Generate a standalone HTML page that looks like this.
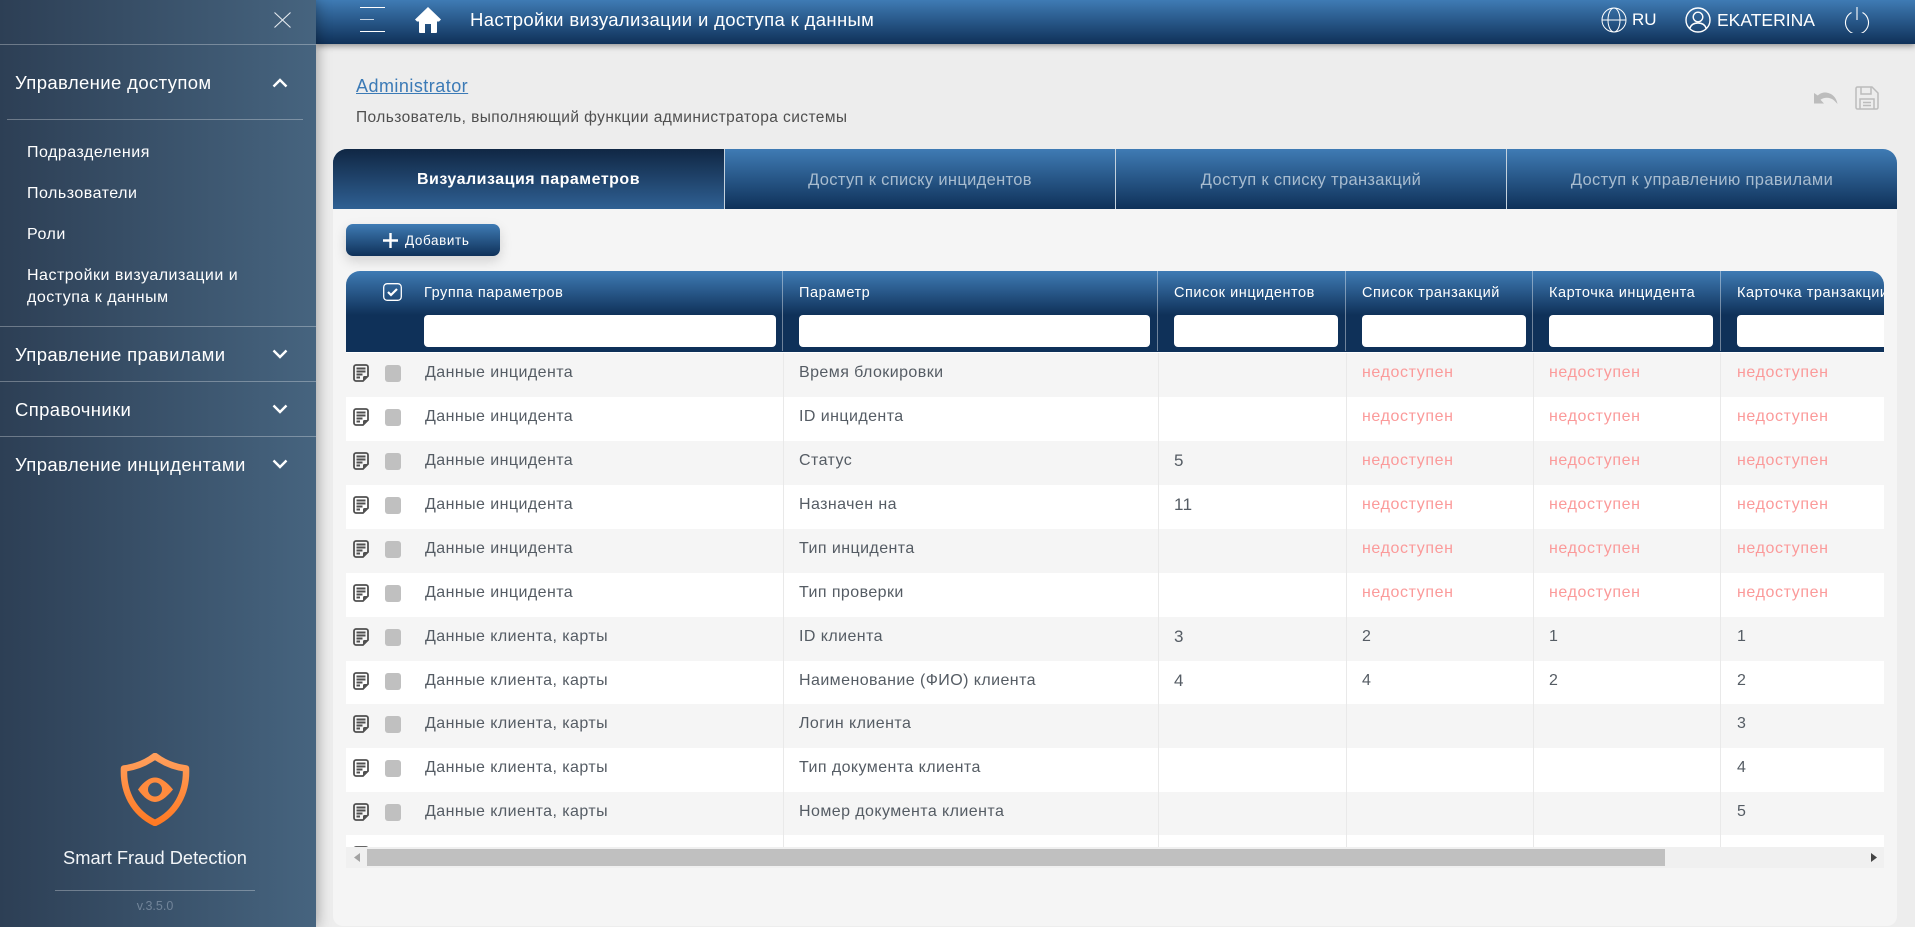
<!DOCTYPE html>
<html lang="ru"><head><meta charset="utf-8"><title>Настройки визуализации и доступа к данным</title>
<style>
*{box-sizing:border-box}
html,body{margin:0;padding:0;width:1915px;height:927px;overflow:hidden;background:#ededed;font-family:"Liberation Sans",sans-serif}
.a{position:absolute;white-space:nowrap}
.g{background:linear-gradient(180deg,#3f7bb4 0%,#0f3159 100%)}
#side{position:absolute;left:0;top:0;width:316px;height:927px;background:linear-gradient(90deg,#2d3f55 0%,#46647f 100%);box-shadow:0 0 14px rgba(0,0,0,.4);z-index:5;color:#fff}
#side .l{position:absolute;height:1px;background:rgba(255,255,255,.3)}
.m{position:absolute;left:15px;font-size:18.5px;line-height:22px;white-space:nowrap;letter-spacing:.38px}
.s{position:absolute;left:27px;font-size:16px;line-height:20px;white-space:nowrap;letter-spacing:.5px}
#top{position:absolute;left:316px;top:0;width:1599px;height:44px;z-index:4;box-shadow:0 2px 6px rgba(0,0,0,.4);color:#fff}
#card{position:absolute;left:333px;top:149px;width:1564px;height:777px;background:#f5f5f5;border-radius:14px 14px 10px 10px;overflow:hidden}
.tab{position:absolute;top:0;height:60px;line-height:63px;text-align:center;color:#a8bccf;font-size:16.5px;border-left:1px solid #c4d2de;letter-spacing:.33px}
#tbl{position:absolute;left:346px;top:271px;width:1538px;height:576px;overflow:hidden;border-radius:14px 14px 0 0;background:#fff}
#hd{position:absolute;left:0;top:0;width:1538px;height:81px;background:linear-gradient(180deg,#3f7bb4 0,#0f3159 44px,#0f3159 100%);color:#fff;font-size:14.5px}
#hd span{position:absolute;top:13px;line-height:18px;white-space:nowrap;letter-spacing:.55px}
#hd u{position:absolute;top:44px;height:32px;background:#fff;border-radius:4px;display:block}
#hd em{position:absolute;top:0;width:1px;height:80px;background:rgba(255,255,255,.4)}
.r{position:absolute;left:0;width:1538px;height:44px;background:#fff;color:#555c64;font-size:16px;line-height:44px}
.r.o{background:#f5f5f5}
.r span{position:absolute;top:-2px;white-space:nowrap;letter-spacing:.43px}
.r svg{position:absolute;left:7px;top:11px}
.r i{position:absolute;left:39px;top:12px;width:16px;height:17px;background:#c0c0c0;border-radius:3px}
.c1{left:79px}.c2{left:453px}.c3{left:828px;font-size:17px}.c4{left:1016px}.c5{left:1203px}.c6{left:1391px}
.r span.n{color:#fb9a9a;letter-spacing:.6px}
.v{position:absolute;top:82px;width:1px;height:494px;background:#e9e9e9;z-index:2}
</style></head><body>
<svg width="0" height="0" style="position:absolute"><defs>
<symbol id="doc" viewBox="0 0 16 18"><path d="M3 1h10a2 2 0 0 1 2 2v9l-5 5H3a2 2 0 0 1-2-2V3a2 2 0 0 1 2-2z" fill="none" stroke="#505050" stroke-width="1.8"/><path d="M3.500 4.500h9M3.500 7.500h9M3.500 10.500h6M3.500 13.500h3.500" stroke="#505050" stroke-width="1.9"/><path d="M10 17v-3.500a1.500 1.500 0 0 1 1.500-1.500H15z" fill="#505050"/></symbol>
<linearGradient id="og" x1="0" y1="0" x2="0" y2="1"><stop offset="0" stop-color="#ff9f5c"/><stop offset="1" stop-color="#ff7a24"/></linearGradient>
</defs></svg>

<div id="side">
<svg class="a" style="left:274px;top:12px" width="17" height="16" viewBox="0 0 17 16"><path d="M.5.5l16 15M16.500.5l-16 15" stroke="#e6ebf0" stroke-width="1.1" fill="none"/></svg>
<div class="l" style="left:0;top:44px;width:316px"></div>
<div class="m" style="top:72px">Управление доступом</div>
<svg class="a" style="left:272px;top:78px" width="16" height="10" viewBox="0 0 16 10"><path d="M1.500 8.500L8 2l6.500 6.500" stroke="#fff" stroke-width="2.400" fill="none"/></svg>
<div class="l" style="left:7px;top:119px;width:296px"></div>
<div class="s" style="top:143px">Подразделения</div>
<div class="s" style="top:184px">Пользователи</div>
<div class="s" style="top:225px">Роли</div>
<div class="s" style="top:266px">Настройки визуализации и</div>
<div class="s" style="top:288px">доступа к данным</div>
<div class="l" style="left:0;top:326px;width:316px"></div>
<div class="m" style="top:344px">Управление правилами</div>
<svg class="a" style="left:272px;top:349px" width="16" height="10" viewBox="0 0 16 10"><path d="M1.500 1.500L8 8l6.500-6.500" stroke="#fff" stroke-width="2.400" fill="none"/></svg>
<div class="l" style="left:0;top:381px;width:316px"></div>
<div class="m" style="top:399px">Справочники</div>
<svg class="a" style="left:272px;top:404px" width="16" height="10" viewBox="0 0 16 10"><path d="M1.500 1.500L8 8l6.500-6.500" stroke="#fff" stroke-width="2.400" fill="none"/></svg>
<div class="l" style="left:0;top:436px;width:316px"></div>
<div class="m" style="top:454px">Управление инцидентами</div>
<svg class="a" style="left:272px;top:459px" width="16" height="10" viewBox="0 0 16 10"><path d="M1.500 1.500L8 8l6.500-6.500" stroke="#fff" stroke-width="2.400" fill="none"/></svg>
<svg class="a" style="left:120px;top:753px" width="70" height="73" viewBox="0 0 70 73"><path d="M35 3C44 10 54 14 66 15.500C67 40 56 60 35 70C14 60 3 40 4 15.500C16 14 26 10 35 3Z" fill="none" stroke="url(#og)" stroke-width="6.500" stroke-linejoin="round"/><path d="M18 36.500C24 28 30 24.500 35 24.500C40 24.500 46 28 53 36.500C46 45 40 49 35 49C30 49 24 45 18 36.500Z" fill="#ff8b3e"/><circle cx="35" cy="36.500" r="7" fill="#3d566f"/></svg>
<div class="a" style="left:0;width:310px;text-align:center;top:847px;font-size:18.300px;line-height:22px;color:#f2f5f8">Smart Fraud Detection</div>
<div class="l" style="left:55px;top:890px;width:200px"></div>
<div class="a" style="left:0;width:310px;text-align:center;top:899px;font-size:12.500px;line-height:15px;color:#718499">v.3.5.0</div>
</div>

<div id="top" class="g">
<div class="a" style="left:44px;top:7px;width:25px;height:1px;background:#fff"></div>
<div class="a" style="left:44px;top:19px;width:14px;height:1px;background:#c8d5e2"></div>
<div class="a" style="left:44px;top:31px;width:25px;height:1px;background:#fff"></div>
<svg class="a" style="left:99px;top:7px" width="26" height="26" viewBox="0 0 26 26"><path d="M13 0L26 12.500L24 14.500H22V25a1 1 0 0 1-1 1H16V17H10V26H5a1 1 0 0 1-1-1V14.500H2L0 12.500Z" fill="#fff"/></svg>
<div class="a" style="left:154px;top:9px;font-size:18.500px;line-height:22px;letter-spacing:.35px">Настройки визуализации и доступа к данным</div>
<svg class="a" style="left:1285px;top:7px" width="26" height="26" viewBox="0 0 26 26" fill="none" stroke="#fff" stroke-width="1"><circle cx="13" cy="13" r="12"/><ellipse cx="13" cy="13" rx="6" ry="12"/><path d="M1 13h24"/></svg>
<div class="a" style="left:1316px;top:9px;font-size:17px;line-height:22px">RU</div>
<svg class="a" style="left:1369px;top:7px" width="26" height="26" viewBox="0 0 26 26" fill="none" stroke="#fff" stroke-width="1.400"><circle cx="13" cy="13" r="12"/><circle cx="13" cy="10" r="4.800"/><path d="M4.800 21.500C6 17.500 9 16 13 16S20 17.500 21.200 21.500"/></svg>
<div class="a" style="left:1401px;top:9px;font-size:17.500px;line-height:22px">EKATERINA</div>
<svg class="a" style="left:1528px;top:6px" width="26" height="27" viewBox="0 0 26 27" fill="none" stroke="#fff" stroke-width="1.100"><path d="M7.500 6.500A11.500 11.500 0 1 0 18.500 6.500"/><path d="M13 1v13"/></svg>
</div>

<div class="a" style="left:356px;top:75px;font-size:18px;line-height:22px;color:#3b7ab6;text-decoration:underline;letter-spacing:.47px">Administrator</div>
<div class="a" style="left:356px;top:108px;font-size:15.500px;line-height:20px;color:#4f4f4f;letter-spacing:.42px">Пользователь, выполняющий функции администратора системы</div>
<svg class="a" style="left:1814px;top:91px" width="24" height="13" viewBox="0 0 24 13"><path d="M0 2V12.500H10L6.500 8.800C10 6 16 6 19.500 9C21 10.200 22 11.500 23.500 13C22.500 6 17 1.500 11 1.500C8 1.500 5.500 2.800 3.800 4.500Z" fill="#bcbcbc"/></svg>
<svg class="a" style="left:1855px;top:86px" width="24" height="24" viewBox="0 0 24 24" fill="none" stroke="#bcbcbc" stroke-width="1.500"><path d="M2.500 1H17L23 7V21.500a1.500 1.500 0 0 1-1.500 1.500H2.500A1.500 1.500 0 0 1 1 21.500V2.500A1.500 1.500 0 0 1 2.500 1Z"/><path d="M6 1V8H16V1M5 23V13H19V23M8 16.500H16M8 19.500H16"/></svg>

<div id="card">
<div class="a" style="left:0;top:0;width:1564px;height:60px;background:linear-gradient(180deg,#3f7bb4 0%,#0f3159 100%)"></div>
<div class="tab" style="left:0;width:391px;border:0;color:#fff;font-weight:bold;font-size:16px;background:linear-gradient(180deg,#102744 0%,#2f6093 100%);line-height:61px;letter-spacing:.5px">Визуализация параметров</div>
<div class="tab" style="left:391px;width:391px">Доступ к списку инцидентов</div>
<div class="tab" style="left:782px;width:391px">Доступ к списку транзакций</div>
<div class="tab" style="left:1173px;width:391px">Доступ к управлению правилами</div>
</div>

<div class="a g" style="left:346px;top:224px;width:154px;height:32px;border-radius:7px;box-shadow:0 5px 12px rgba(0,0,0,.15)">
<svg class="a" style="left:37px;top:9px" width="15" height="15" viewBox="0 0 15 15"><path d="M7.500 0v15M0 7.500h15" stroke="#fff" stroke-width="2.400"/></svg>
<div class="a" style="left:59px;top:7px;font-size:13.500px;line-height:20px;color:#fff;letter-spacing:.6px">Добавить</div>
</div>

<div id="tbl">
<div id="hd">
<svg class="a" style="left:37px;top:12px" width="19" height="18" viewBox="0 0 19 18"><rect x=".7" y=".7" width="17.600" height="16.600" rx="3.500" fill="none" stroke="#fff" stroke-width="1.300"/><path d="M5 9l3 3 6-6" fill="none" stroke="#fff" stroke-width="2.200"/></svg>
<span style="left:78px">Группа параметров</span><span style="left:453px">Параметр</span><span style="left:828px">Список инцидентов</span><span style="left:1016px">Список транзакций</span><span style="left:1203px">Карточка инцидента</span><span style="left:1391px">Карточка транзакции</span>
<u style="left:78px;width:352px"></u><u style="left:453px;width:351px"></u><u style="left:828px;width:164px"></u><u style="left:1016px;width:164px"></u><u style="left:1203px;width:164px"></u><u style="left:1391px;width:160px"></u>
<em style="left:436px"></em><em style="left:811px"></em><em style="left:999px"></em><em style="left:1186px"></em><em style="left:1374px"></em>
</div>
<div class="v" style="left:437px"></div><div class="v" style="left:812px"></div><div class="v" style="left:1000px"></div><div class="v" style="left:1187px"></div><div class="v" style="left:1374px"></div>

<div class="r o" style="top:82px"><svg width="16" height="18"><use href="#doc"/></svg><i></i><span class="c1">Данные инцидента</span><span class="c2">Время блокировки</span><span class="c4 n">недоступен</span><span class="c5 n">недоступен</span><span class="c6 n">недоступен</span></div>
<div class="r" style="top:126px"><svg width="16" height="18"><use href="#doc"/></svg><i></i><span class="c1">Данные инцидента</span><span class="c2">ID инцидента</span><span class="c4 n">недоступен</span><span class="c5 n">недоступен</span><span class="c6 n">недоступен</span></div>
<div class="r o" style="top:170px"><svg width="16" height="18"><use href="#doc"/></svg><i></i><span class="c1">Данные инцидента</span><span class="c2">Статус</span><span class="c3">5</span><span class="c4 n">недоступен</span><span class="c5 n">недоступен</span><span class="c6 n">недоступен</span></div>
<div class="r" style="top:214px"><svg width="16" height="18"><use href="#doc"/></svg><i></i><span class="c1">Данные инцидента</span><span class="c2">Назначен на</span><span class="c3">11</span><span class="c4 n">недоступен</span><span class="c5 n">недоступен</span><span class="c6 n">недоступен</span></div>
<div class="r o" style="top:258px"><svg width="16" height="18"><use href="#doc"/></svg><i></i><span class="c1">Данные инцидента</span><span class="c2">Тип инцидента</span><span class="c4 n">недоступен</span><span class="c5 n">недоступен</span><span class="c6 n">недоступен</span></div>
<div class="r" style="top:302px"><svg width="16" height="18"><use href="#doc"/></svg><i></i><span class="c1">Данные инцидента</span><span class="c2">Тип проверки</span><span class="c4 n">недоступен</span><span class="c5 n">недоступен</span><span class="c6 n">недоступен</span></div>
<div class="r o" style="top:346px"><svg width="16" height="18"><use href="#doc"/></svg><i></i><span class="c1">Данные клиента, карты</span><span class="c2">ID клиента</span><span class="c3">3</span><span class="c4">2</span><span class="c5">1</span><span class="c6">1</span></div>
<div class="r" style="top:390px"><svg width="16" height="18"><use href="#doc"/></svg><i></i><span class="c1">Данные клиента, карты</span><span class="c2">Наименование (ФИО) клиента</span><span class="c3">4</span><span class="c4">4</span><span class="c5">2</span><span class="c6">2</span></div>
<div class="r o" style="top:433px"><svg width="16" height="18"><use href="#doc"/></svg><i></i><span class="c1">Данные клиента, карты</span><span class="c2">Логин клиента</span><span class="c6">3</span></div>
<div class="r" style="top:477px"><svg width="16" height="18"><use href="#doc"/></svg><i></i><span class="c1">Данные клиента, карты</span><span class="c2">Тип документа клиента</span><span class="c6">4</span></div>
<div class="r o" style="top:521px"><svg width="16" height="18"><use href="#doc"/></svg><i></i><span class="c1">Данные клиента, карты</span><span class="c2">Номер документа клиента</span><span class="c6">5</span></div>
<div class="r" style="top:564px"><svg width="16" height="18"><use href="#doc"/></svg></div>
</div>

<div class="a" style="left:346px;top:847px;width:1538px;height:21px;background:#f0f0f0">
<div class="a" style="left:21px;top:2px;width:1298px;height:17px;background:#c0c0c0"></div>
<svg class="a" style="left:8px;top:6px" width="6" height="9" viewBox="0 0 6 9"><path d="M6 0L0 4.500L6 9Z" fill="#a3a3a3"/></svg>
<svg class="a" style="left:1525px;top:6px" width="6" height="9" viewBox="0 0 6 9"><path d="M0 0L6 4.500L0 9Z" fill="#444"/></svg>
</div>
</body></html>
